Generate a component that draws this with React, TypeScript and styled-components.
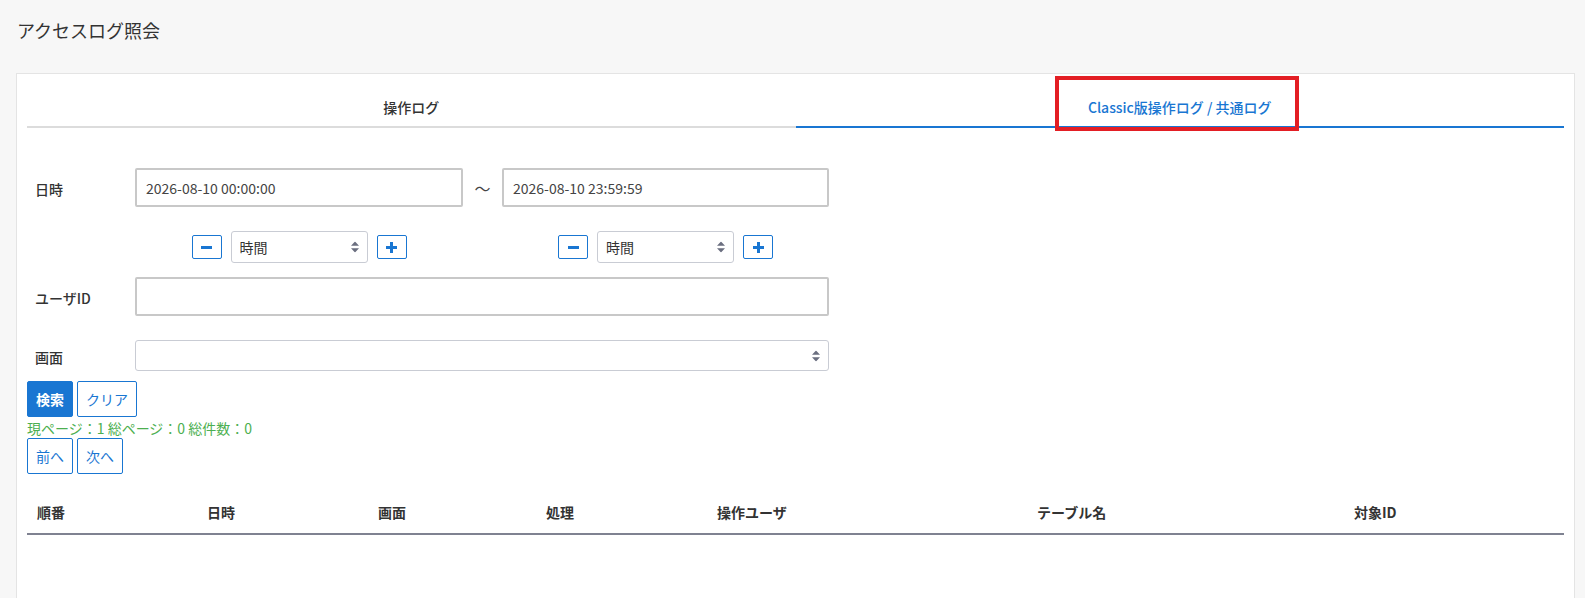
import React from "react";
import styled, { createGlobalStyle } from "styled-components";

const GlobalStyle = createGlobalStyle`
  html, body {
    margin: 0;
    padding: 0;
    background: #f7f7f7;
  }
  body {
    font-family: "Noto Sans CJK JP", "Noto Sans", sans-serif;
    color: #333;
  }
`;

const Page = styled.div`
  padding: 16px 10px 0 16px;
`;
const Title = styled.h1`
  margin: 0 0 0 1px;
  font-size: 18px;
  font-weight: 400;
  line-height: 28px;
  color: #333;
`;
const Card = styled.div`
  margin-top: 29px;
  min-height: 540px;
  background: #fff;
  border: 1px solid #e4e4e4;
  padding: 14px 10px 0;
`;
const Tabs = styled.div`
  display: grid;
  grid-template-columns: 1fr 1fr;
`;
const Tab = styled.div<{ $active?: boolean }>`
  position: relative;
  height: 38px;
  line-height: 38px;
  text-align: center;
  font-size: 14px;
  font-weight: 500;
  color: ${(p) => (p.$active ? "#1976d2" : "#333")};
  border-bottom: 2px solid ${(p) => (p.$active ? "#1976d2" : "#dcdcdc")};
`;
const Highlight = styled.div`
  position: absolute;
  top: -12px;
  left: 50%;
  transform: translateX(-50%);
  margin-left: -3px;
  width: 244px;
  height: 55px;
  box-sizing: border-box;
  border: 4px solid #e31e24;
`;
const Form = styled.div`
  margin-top: 40px;
`;
const Row = styled.div<{ $gap?: number }>`
  display: grid;
  grid-template-columns: 108px 328px 39px 327px;
  align-items: center;
  margin-top: ${(p) => p.$gap || 0}px;
`;
const Label = styled.div`
  padding: 3px 0 0 8px;
  font-size: 14px;
  font-weight: 500;
  color: #333;
`;
const TextInput = styled.input<{ $wide?: boolean }>`
  grid-column: ${(p) => (p.$wide ? "2 / 5" : "auto")};
  height: 39px;
  box-sizing: border-box;
  border: 2px solid #c8c8c8;
  border-radius: 2px;
  padding: 0 9px;
  font-family: inherit;
  font-size: 14px;
  color: #444;
  outline: none;
`;
const Tilde = styled.div`
  text-align: center;
  font-size: 16px;
  color: #444;
`;
const StepGroup = styled.div<{ $col: number }>`
  grid-column: ${(p) => p.$col};
  display: flex;
  justify-content: center;
  align-items: center;
  gap: 9px;
`;
const StepButton = styled.button`
  width: 30px;
  height: 24px;
  padding: 0;
  display: flex;
  align-items: center;
  justify-content: center;
  background: #fff;
  border: 1px solid #1976d2;
  border-radius: 2px;
`;
const SelectBox = styled.div<{ $wide?: boolean }>`
  position: relative;
  grid-column: ${(p) => (p.$wide ? "2 / 5" : "auto")};
  width: ${(p) => (p.$wide ? "auto" : "137px")};
  height: ${(p) => (p.$wide ? "31px" : "32px")};
  select {
    width: 100%;
    height: 100%;
    box-sizing: border-box;
    appearance: none;
    border: 1px solid #c9ccd4;
    border-radius: 3px;
    background: #fff;
    padding: 0 24px 0 8px;
    font-family: inherit;
    font-size: 14px;
    color: #333;
    outline: none;
  }
  svg {
    position: absolute;
    right: 9px;
    top: 50%;
    transform: translateY(-50%);
    pointer-events: none;
  }
`;
const Buttons = styled.div<{ $gap?: number }>`
  display: flex;
  gap: 4px;
  margin-top: ${(p) => p.$gap || 0}px;
`;
const ActionButton = styled.button<{ $primary?: boolean }>`
  height: 36px;
  padding: 0 8px;
  font-family: inherit;
  font-size: 14px;
  font-weight: ${(p) => (p.$primary ? 700 : 400)};
  color: ${(p) => (p.$primary ? "#fff" : "#1976d2")};
  background: ${(p) => (p.$primary ? "#1976d2" : "#fff")};
  border: 1px solid #1976d2;
  border-radius: 2px;
`;
const PageInfo = styled.div`
  margin-top: 2px;
  font-size: 14px;
  line-height: 19px;
  color: #4caf50;
`;
const TableHead = styled.div`
  margin-top: 16px;
  display: grid;
  grid-template-columns: 170px 171px 168px 171px 320px 317px 1fr;
  height: 43px;
  align-items: center;
  border-bottom: 2px solid #7f8291;
`;
const HeadCell = styled.div`
  padding: 0 10px;
  font-size: 14px;
  font-weight: 700;
  color: #333;
`;

const Arrows = () => (
  <svg width="8" height="11" viewBox="0 0 8 11">
    <path d="M4 0 L8 4.3 H0 Z M4 11 L0 6.7 H8 Z" fill="#6b6f80" />
  </svg>
);

const Minus = () => (
  <svg width="11" height="3" viewBox="0 0 11 3">
    <rect width="11" height="3" fill="#1976d2" />
  </svg>
);

const Plus = () => (
  <svg width="11" height="11" viewBox="0 0 11 11">
    <rect y="4" width="11" height="3" fill="#1976d2" />
    <rect x="4" width="3" height="11" fill="#1976d2" />
  </svg>
);

const Stepper = ({ col }: { col: number }) => (
  <StepGroup $col={col}>
    <StepButton>
      <Minus />
    </StepButton>
    <SelectBox>
      <select defaultValue="hour">
        <option value="hour">時間</option>
        <option value="day">日</option>
      </select>
      <Arrows />
    </SelectBox>
    <StepButton>
      <Plus />
    </StepButton>
  </StepGroup>
);

const columns = ["順番", "日時", "画面", "処理", "操作ユーザ", "テーブル名", "対象ID"];

const App = () => {
  return (
    <>
      <GlobalStyle />
      <Page>
        <Title>アクセスログ照会</Title>
        <Card>
          <Tabs>
            <Tab>操作ログ</Tab>
            <Tab $active>
              Classic版操作ログ / 共通ログ
              <Highlight />
            </Tab>
          </Tabs>
          <Form>
            <Row>
              <Label>日時</Label>
              <TextInput defaultValue="2026-08-10 00:00:00" />
              <Tilde>～</Tilde>
              <TextInput defaultValue="2026-08-10 23:59:59" />
            </Row>
            <Row $gap={24}>
              <Stepper col={2} />
              <Stepper col={4} />
            </Row>
            <Row $gap={14}>
              <Label>ユーザID</Label>
              <TextInput $wide />
            </Row>
            <Row $gap={24}>
              <Label>画面</Label>
              <SelectBox $wide>
                <select defaultValue="">
                  <option value=""></option>
                </select>
                <Arrows />
              </SelectBox>
            </Row>
          </Form>
          <Buttons $gap={10}>
            <ActionButton $primary>検索</ActionButton>
            <ActionButton>クリア</ActionButton>
          </Buttons>
          <PageInfo>現ページ：1 総ページ：0 総件数：0</PageInfo>
          <Buttons>
            <ActionButton>前へ</ActionButton>
            <ActionButton>次へ</ActionButton>
          </Buttons>
          <TableHead>
            {columns.map((c) => (
              <HeadCell key={c}>{c}</HeadCell>
            ))}
          </TableHead>
        </Card>
      </Page>
    </>
  );
};

export default App;
